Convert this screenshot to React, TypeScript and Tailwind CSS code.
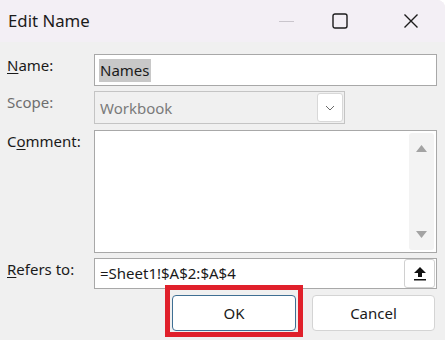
import React from 'react';

const font = { fontFamily: '"Noto Sans", "Open Sans", sans-serif' };

const Label = ({ children, dim }: { children: React.ReactNode; dim?: boolean }) => (
  <div className={`w-[87px] shrink-0 text-[15px] ${dim ? 'text-[#6e6e6e]' : 'text-[#1a1a1a]'}`}>{children}</div>
);

export default function App() {
  return (
    <div className="w-[445px] h-[340px] bg-[#f0f0f0] flex flex-col overflow-hidden rounded-tr-[8px]" style={font}>
      {/* Title bar */}
      <div className="h-[42px] bg-[#f3eff5] flex items-center pl-[8px] shrink-0">
        <span className="text-[16.8px] text-[#1b1b1b] flex-1">Edit Name</span>
        <div className="w-[46px] flex justify-center mr-[23px]">
          <div className="w-[15px] h-[1px] bg-[#c9c5cc]" />
        </div>
        <svg width="16" height="16" viewBox="0 0 16 16" className="mr-[55px]">
          <rect x="1" y="1" width="14" height="14" rx="2" fill="none" stroke="#1b1b1b" strokeWidth="1.4" />
        </svg>
        <svg width="16" height="16" viewBox="0 0 16 16" className="mr-[26px]">
          <path d="M1.5 1.5 L14.5 14.5 M14.5 1.5 L1.5 14.5" stroke="#1b1b1b" strokeWidth="1.4" />
        </svg>
      </div>

      {/* Body */}
      <div className="flex flex-col pl-[7px] pr-[8px] pt-[12px] gap-[5px]">
        <div className="flex">
          <Label><span className="underline underline-offset-2">N</span>ame:</Label>
          <div className="flex-1 h-[32px] bg-white border border-[#a8a8a8] flex items-center px-[4px]">
            <span className="text-[15px] text-[#1a1a1a] bg-[#c8c8c8] px-[1px] leading-[23px]">Names</span>
          </div>
        </div>

        <div className="flex">
          <Label dim>Scope:</Label>
          <div className="w-[251px] h-[33px] bg-[#f0f0f0] border border-[#c4c4c4] flex items-center pl-[5px] pr-[1px]">
            <span className="flex-1 text-[15px] text-[#7a7a7a] pt-[2px]">Workbook</span>
            <div className="w-[26px] h-[29px] bg-white border border-[#d8d8d8] rounded-[3px] flex items-center justify-center">
              <svg width="10" height="6" viewBox="0 0 10 6">
                <path d="M1 1 L5 5 L9 1" fill="none" stroke="#6a6a6a" strokeWidth="1" />
              </svg>
            </div>
          </div>
        </div>

        <div className="flex mt-[1px]">
          <Label><span>C</span><span className="underline underline-offset-2">o</span>mment:</Label>
          <div className="flex-1 h-[123px] bg-white border border-[#a8a8a8] flex justify-end pt-[2px] pb-[2px] pr-[2px]">
            <div className="w-[25px] bg-[#f3f3f3] rounded-[3px] flex flex-col items-center justify-between py-[12px]">
              <svg width="11" height="7" viewBox="0 0 11 7"><path d="M0 7 L5.5 0 L11 7 Z" fill="#a3a3a3" /></svg>
              <svg width="11" height="7" viewBox="0 0 11 7"><path d="M0 0 L5.5 7 L11 0 Z" fill="#a3a3a3" /></svg>
            </div>
          </div>
        </div>

        <div className="flex">
          <Label><span className="underline underline-offset-2">R</span>efers to:</Label>
          <div className="flex-1 h-[31px] bg-white border border-[#a8a8a8] flex items-center pl-[5px] pr-[1px]">
            <span className="flex-1 text-[15px] text-[#1a1a1a]">=Sheet1!$A$2:$A$4</span>
            <div className="w-[31px] h-[29px] bg-white border border-[#d0d0d0] rounded-[3px] flex items-center justify-center">
              <svg width="12" height="14" viewBox="0 0 12 14">
                <path d="M6 0 L12 6 L8 6 L8 10 L4 10 L4 6 L0 6 Z" fill="#111" />
                <rect x="0" y="12" width="12" height="1.5" fill="#111" />
              </svg>
            </div>
          </div>
        </div>

        {/* Buttons */}
        <div className="flex justify-end gap-[9px] mt-[-9px] pr-[2px]">
          <div className="border-[5px] border-[#e0202b] pt-[5px] px-[2px] pb-[1px]">
            <button className="block w-[124px] h-[36px] bg-white border border-[#3f6f93] rounded-[4px] text-[15px] text-[#1a1a1a]">OK</button>
          </div>
          <button className="w-[123px] h-[36px] mt-[10px] bg-white border border-[#d4d4d4] rounded-[4px] text-[15px] text-[#1a1a1a]">Cancel</button>
        </div>
      </div>
    </div>
  );
}
